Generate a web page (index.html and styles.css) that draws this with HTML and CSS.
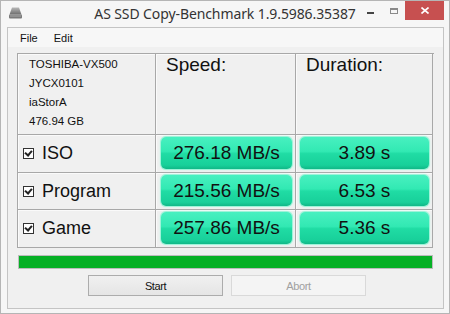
FILE: index.html
```html
<!DOCTYPE html>
<html lang="en">
<head>
    <meta charset="UTF-8">
    <title>AS SSD Copy-Benchmark</title>
    <link rel="stylesheet" href="styles.css">
</head>
<body>
    <div class="window">
        <!-- Title bar -->
        <div class="titlebar">
            <div class="title-left">
                <svg class="app-icon" width="15" height="12" viewBox="0 0 15 12">
                    <defs>
                        <linearGradient id="drive" x1="0" y1="0" x2="0" y2="1">
                            <stop offset="0" stop-color="#b8b8b8"/>
                            <stop offset="0.6" stop-color="#8a8a8a"/>
                            <stop offset="1" stop-color="#6e6e6e"/>
                        </linearGradient>
                    </defs>
                    <path d="M4 0.5 H11 L13.5 7.5 H1.5 Z" fill="url(#drive)"/>
                    <rect x="1" y="7.5" width="13" height="4" rx="1" fill="#7a7a7a"/>
                    <rect x="2" y="8.5" width="11" height="1" fill="#a8a8a8"/>
                </svg>
            </div>
            <span class="title">AS SSD Copy-Benchmark 1.9.5986.35387</span>
            <div class="controls">
                <span class="ctl ctl-min"><i></i></span>
                <span class="ctl ctl-max"><i></i></span>
                <span class="ctl ctl-close">
                    <svg width="8" height="7" viewBox="0 0 8 7">
                        <path d="M0.5 0.5 L7.5 6.5 M7.5 0.5 L0.5 6.5" stroke="#fff" stroke-width="1.6"/>
                    </svg>
                </span>
            </div>
        </div>

        <div class="client">
            <div class="menubar">
                <span class="menu-item">File</span>
                <span class="menu-item">Edit</span>
            </div>

            <!-- Benchmark grid -->
            <div class="bench">
                <div class="cell drive-info">
                    <div>TOSHIBA-VX500</div>
                    <div>JYCX0101</div>
                    <div>iaStorA</div>
                    <div>476.94 GB</div>
                </div>
                <div class="cell head">Speed:</div>
                <div class="cell head">Duration:</div>

                <div class="cell test"><span class="check"></span>ISO</div>
                <div class="cell result speed"><span class="value">276.18 MB/s</span></div>
                <div class="cell result time"><span class="value">3.89 s</span></div>

                <div class="cell test"><span class="check"></span>Program</div>
                <div class="cell result speed"><span class="value">215.56 MB/s</span></div>
                <div class="cell result time"><span class="value">6.53 s</span></div>

                <div class="cell test"><span class="check"></span>Game</div>
                <div class="cell result speed"><span class="value">257.86 MB/s</span></div>
                <div class="cell result time"><span class="value">5.36 s</span></div>
            </div>

            <div class="progress"><div class="progress-fill"></div></div>

            <div class="actions">
                <button class="btn">Start</button>
                <button class="btn" disabled>Abort</button>
            </div>
        </div>
    </div>
</body>
</html>
```

FILE: styles.css
```css
/* Window frame */
html, body {
    margin: 0;
    padding: 0;
}
body {
    font-family: "Liberation Sans", Arial, sans-serif;
    background-color: #f6f6f6;
}
.window {
    width: 450px;
    height: 314px;
    box-sizing: border-box;
    border: 1px solid #b5b5b5;
    background-color: #f6f6f6;
    display: flex;
    flex-direction: column;
}
.titlebar {
    height: 26px;
    display: grid;
    grid-template-columns: 1fr auto 1fr;
    align-items: start;
}
.title-left {
    padding: 6px 0 0 7px;
}
.app-icon {
    display: block;
}
.title {
    font-family: "Noto Sans", "Open Sans", sans-serif;
    font-size: 14px;
    color: #333;
    line-height: 16px;
    padding-top: 5px;
    white-space: nowrap;
    letter-spacing: -0.1px;
}
.controls {
    display: flex;
    justify-content: flex-end;
    padding-right: 5px;
}
.ctl {
    height: 19px;
    display: flex;
    justify-content: center;
}
.ctl-min {
    width: 26px;
}
.ctl-min i {
    width: 7px;
    height: 2px;
    margin-top: 11px;
    background-color: #444;
}
.ctl-max {
    width: 22px;
}
.ctl-max i {
    width: 8px;
    height: 6px;
    margin-top: 7px;
    box-sizing: border-box;
    border: 1px solid #8a8a8a;
    border-top-width: 2px;
}
.ctl-close {
    width: 39px;
    background-color: #c75050;
    align-items: center;
}
.ctl-close svg {
    display: block;
}

/* Client area */
.client {
    flex: 1;
    margin: 0 5px 4px 6px;
    border: 1px solid #c4c4c4;
    background-color: #f0f0f0;
}
.menubar {
    height: 19px;
    display: flex;
    align-items: center;
    padding-left: 4px;
    background-color: #f7f7f7;
    font-size: 11px;
    color: #111;
}
.menu-item {
    padding: 0 8px;
}

/* Benchmark table */
.bench {
    margin: 6px 0 0 9px;
    width: 416px;
    display: grid;
    grid-template-columns: 138px 140px 137px;
    grid-template-rows: 81px 38px 37px 38px;
    border-left: 1px solid #a8a8a8;
    border-top: 1px solid #a8a8a8;
}
.cell {
    border-right: 1px solid #a8a8a8;
    border-bottom: 1px solid #a8a8a8;
    box-shadow: inset 1px 1px 0 #fafafa;
}
.drive-info {
    padding: 1px 0 0 11px;
    font-size: 11.5px;
    line-height: 19px;
    color: #111;
}
.head {
    padding: 0 0 0 10px;
    font-size: 19px;
    line-height: 22px;
    color: #111;
}
.test {
    display: flex;
    align-items: center;
    padding-left: 5px;
    font-size: 18px;
    color: #111;
}
.check {
    width: 11px;
    height: 11px;
    box-sizing: border-box;
    margin-right: 8px;
    border: 1px solid #333;
    background-color: #fff;
    position: relative;
}
.check::after {
    content: "";
    position: absolute;
    left: 2px;
    top: 0;
    width: 3px;
    height: 5px;
    border-right: 2px solid #222;
    border-bottom: 2px solid #222;
    transform: rotate(40deg);
}
.result {
    display: flex;
    padding: 2px 3px 3px 5px;
}
.time {
    padding-left: 4px;
}
.value {
    flex: 1;
    display: flex;
    align-items: center;
    justify-content: center;
    border-radius: 5px;
    font-size: 19px;
    color: #111;
    background: linear-gradient(to bottom, #48f0c0 0%, #32e9b3 45%, #20dca4 52%, #18d09a 88%, #10b887 100%);
    box-shadow: 0 0 0 1px #9ef3d9, 0 0 2px 1px #c6f8e9;
}

/* Progress bar */
.progress {
    margin: 7px 0 0 10px;
    width: 415px;
    height: 14px;
    box-sizing: border-box;
    border: 1px solid #bcbcbc;
    background-color: #e6e6e6;
}
.progress-fill {
    height: 100%;
    width: 100%;
    background-color: #06b025;
}

/* Buttons */
.actions {
    margin-top: 6px;
    display: flex;
    gap: 8px;
    padding-left: 80px;
}
.btn {
    width: 135px;
    height: 21px;
    box-sizing: border-box;
    padding: 0;
    font-family: "Liberation Sans", Arial, sans-serif;
    font-size: 11px;
    letter-spacing: -0.4px;
    color: #111;
    border: 1px solid #acacac;
    background: linear-gradient(to bottom, #f0f0f0, #e5e5e5);
}
.btn:disabled {
    color: #a0a0a0;
    border-color: #d9d9d9;
    background: #f4f4f4;
}
```
